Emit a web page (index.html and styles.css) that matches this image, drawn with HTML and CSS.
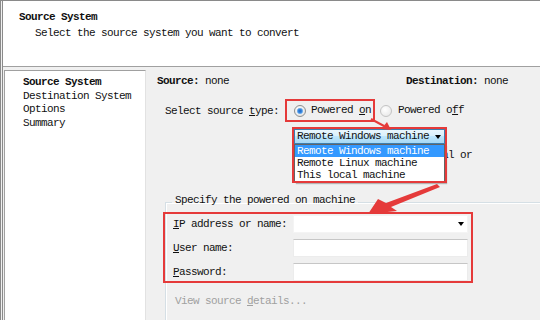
FILE: index.html
```html
<!DOCTYPE html>
<html lang="en">
<head>
  <meta charset="UTF-8">
  <meta name="viewport" content="width=device-width, initial-scale=1.0">
  <title>Source System</title>
  <link rel="stylesheet" href="styles.css">
</head>
<body>
  <div class="window">
    <header class="page-head">
      <h1>Source System</h1>
      <p>Select the source system you want to convert</p>
    </header>

    <div class="main">
      <ul class="steps">
        <li class="current">Source System</li>
        <li>Destination System</li>
        <li>Options</li>
        <li>Summary</li>
      </ul>

      <div class="content">
        <div class="summary">
          <span><b>Source:</b> none</span>
          <span><b>Destination:</b> none</span>
        </div>

        <div class="type-row">
          <span class="type-label">Select source <u>t</u>ype:</span>
          <label class="radio-option mark">
            <span class="radio checked"></span><span>Powered <u>o</u>n</span>
          </label>
          <label class="radio-option">
            <span class="radio"></span><span>Powered o<u>f</u>f</span>
          </label>
        </div>

        <div class="combo-wrap">
          <div class="combo">
            <span>Remote Windows machine</span>
            <span class="caret"></span>
          </div>
          <ul class="combo-list">
            <li class="selected">Remote Windows machine</li>
            <li>Remote Linux machine</li>
            <li>This local machine</li>
          </ul>
          <div class="combo-mark"></div>
        </div>

        <p class="hint">Select a remote physical or</p>

        <fieldset class="group">
          <legend>Specify the powered on machine</legend>
          <div class="fields">
            <div class="field-label"><u>I</u>P address or name:</div>
            <div class="field field-combo"><span class="caret"></span></div>
            <div class="field-label"><u>U</u>ser name:</div>
            <div class="field"></div>
            <div class="field-label"><u>P</u>assword:</div>
            <div class="field"></div>
          </div>
          <div class="details">View source <u>d</u>etails...</div>
        </fieldset>
      </div>
    </div>
  </div>

  <!-- annotation arrows drawn over the dialog -->
  <svg class="arrows" width="540" height="320" viewBox="0 0 540 320">
    <line x1="371" y1="119" x2="384" y2="126" stroke="#e53a3a" stroke-width="2"/>
    <polygon points="391,130 381,129 387,122" fill="#e53a3a"/>
    <polygon points="437,184 440,187 391,207 397,211 368,214 378,199 386,203" fill="#e53a3a"/>
  </svg>
</body>
</html>
```

FILE: styles.css
```css
* {
  box-sizing: border-box;
}

body {
  margin: 0;
  width: 540px;
  height: 320px;
  overflow: hidden;
  position: relative;
  background: #f0f0f0;
  font-family: "Liberation Mono", "DejaVu Sans Mono", monospace;
  font-size: 11px;
  line-height: 14px;
  letter-spacing: -0.6px;
  color: #111;
}

u {
  text-underline-offset: 1px;
}

.window {
  height: 320px;
  display: flex;
  flex-direction: column;
  border-top: 1px solid #8a8a8a;
  border-left: 3px double #8a8a8a;
}

.page-head {
  flex-shrink: 0;
  height: 66px;
  background: #fff;
  border-bottom: 1px solid #a0a0a0;
  padding-top: 9px;
}

.page-head h1 {
  margin: 0;
  padding-left: 16px;
  font-size: 11px;
  font-weight: bold;
}

.page-head p {
  margin: 2px 0 0;
  padding-left: 32px;
}

.main {
  flex: 1;
  min-height: 0;
  overflow: hidden;
  display: flex;
  padding-top: 3px;
}

.steps {
  flex-shrink: 0;
  width: 142px;
  margin: 0 0 0 1px;
  padding: 5px 0 0 18px;
  list-style: none;
  background: #fff;
  border-top: 1px solid #a0a0a0;
  border-left: 1px solid #a0a0a0;
  border-right: 1px solid #e2e2e2;
  line-height: 13.5px;
}

.steps .current {
  font-weight: bold;
}

.content {
  flex: 1;
  padding: 4px 0 0 11px;
}

.summary {
  display: flex;
  justify-content: space-between;
  padding-right: 32px;
}

.type-row {
  display: flex;
  align-items: center;
  margin-top: 11px;
  padding-left: 8px;
}

.type-label {
  width: 120px;
}

.radio-option {
  display: inline-flex;
  align-items: center;
  line-height: 19px;
}

.radio-option.mark {
  border: 2px solid #e53a3a;
  padding: 0 2px 0 7px;
}

.radio-option + .radio-option {
  margin-left: 5px;
}

.radio {
  width: 12px;
  height: 12px;
  margin-right: 5px;
  border-radius: 50%;
  border: 1px solid #c4c4c4;
  background: radial-gradient(circle at 40% 35%, #fff, #e4e4e4);
}

.radio-option + .radio-option .radio {
  margin-right: 6px;
}

.radio.checked {
  border-color: #8e8f8f;
  background:
    radial-gradient(circle, #1d64c4 0, #3d8be0 2px, #9ec8f0 3px, transparent 3.5px),
    radial-gradient(circle at 40% 35%, #fff, #dcdcdc);
}

.combo-wrap {
  position: relative;
  width: 151px;
  margin: 7px 0 0 137px;
}

.combo {
  height: 15px;
  display: flex;
  align-items: center;
  justify-content: space-between;
  padding: 0 3px 0 2px;
  border: 1px solid #3c7fb1;
  background: linear-gradient(#eaf6fd, #d9f0fc 45%, #bee6fd 50%, #a7d9f5);
  line-height: 13px;
}

.caret {
  width: 0;
  height: 0;
  border-left: 3.5px solid transparent;
  border-right: 3.5px solid transparent;
  border-top: 4px solid #000;
}

.combo-list {
  position: absolute;
  top: 15px;
  left: 0;
  width: 151px;
  margin: 0;
  padding: 0;
  list-style: none;
  background: #fff;
  border: 1px solid #646464;
  box-shadow: 2px 2px 1px rgba(0, 0, 0, 0.25);
  z-index: 1;
}

.combo-list li {
  line-height: 12px;
  padding-left: 2px;
}

.combo-list .selected {
  background: #3399ff;
  color: #fff;
}

.combo-mark {
  position: absolute;
  top: -2px;
  left: -2px;
  width: 155px;
  height: 56px;
  border: 2px solid #e53a3a;
  pointer-events: none;
  z-index: 2;
}

.hint {
  margin: 4px 0 0;
  padding-left: 153px;
}

.group {
  height: 200px;
  min-width: 0;
  margin: 31px -20px 0 8px;
  padding: 0;
  border: 1px solid #d5dfe5;
  box-shadow: inset 1px 1px 0 #fff;
}

.group legend {
  margin-left: 6px;
  padding: 0 3px 4px;
  line-height: 14px;
}

.fields {
  width: 310px;
  margin: 1px 0 0 -3px;
  padding: 1px 3px 0 8px;
  border: 2px solid #e53a3a;
  display: grid;
  grid-template-columns: 120px 175px;
  row-gap: 6px;
  align-items: center;
}

.field {
  height: 18px;
  background: #fff;
  border: 1px solid #ececec;
  border-top-color: #c6c6c6;
}

.field-combo {
  display: flex;
  align-items: center;
  justify-content: flex-end;
  padding-right: 3px;
  border-color: #f4f4f4;
}

.details {
  margin-top: 11px;
  padding-left: 9px;
  color: #a0a0a0;
}

.arrows {
  position: absolute;
  top: 0;
  left: 0;
  pointer-events: none;
}
```
